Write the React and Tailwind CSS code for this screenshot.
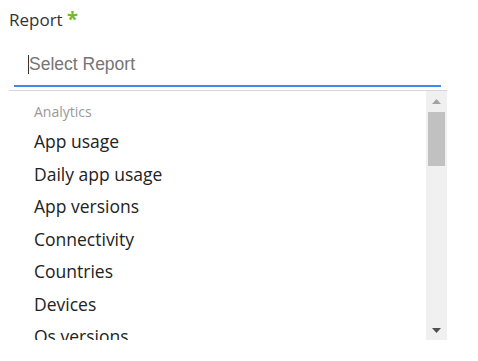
import React from 'react';

const reports = ['App usage', 'Daily app usage', 'App versions', 'Connectivity', 'Countries', 'Devices', 'Os versions'];

function Triangle({ up, color }) {
    return (
        <svg width="9" height="5" viewBox="0 0 9 5">
            {up ? <polygon points="4.5,0 9,5 0,5" fill={color} /> : <polygon points="0,0 9,0 4.5,5" fill={color} />}
        </svg>
    );
}

export default function App() {
    return (
        <div className="w-[478px] h-[361px] bg-white pl-[9px] pt-[7px] font-['Open_Sans',sans-serif] overflow-hidden">
            <div className="text-[17px] leading-[24px] text-[#333]">
                Report <span className="text-[#76b82a] font-bold text-[20px]">*</span>
            </div>

            {/* input */}
            <div className="mt-[12px] ml-[5px] w-[427px]">
                <div className="h-[41px] flex items-center pl-[14px]">
                    <span className="w-px h-[19px] bg-[#333]" />
                    <span className="font-['Liberation_Sans',Arial,sans-serif] text-[17.5px] text-[#757575]">Select Report</span>
                </div>
                <div className="h-[2px] bg-[#3d88f5]" />
            </div>

            {/* dropdown */}
            <div className="mt-[3px] w-[438px] h-[250px] border-t border-[#d6d6d6] flex">
                <div className="flex-1 overflow-hidden pl-[25px]">
                    <div className="h-[34px] pt-[10px] text-[14px] leading-[22px] text-[#999]">Analytics</div>
                    {reports.map((r) => (
                        <div key={r} className="h-[32.5px] leading-[32.5px] text-[17.5px] text-[#222]">{r}</div>
                    ))}
                </div>
                <div className="w-[21px] bg-[#f0f0f0] flex flex-col">
                    <div className="h-[21px] flex items-center justify-center">
                        <Triangle up color="#a3a3a3" />
                    </div>
                    <div className="h-[54px] mx-[2px] bg-[#c1c1c1]" />
                    <div className="flex-1" />
                    <div className="h-[19px] flex items-center justify-center">
                        <Triangle color="#505050" />
                    </div>
                </div>
            </div>
        </div>
    );
}
